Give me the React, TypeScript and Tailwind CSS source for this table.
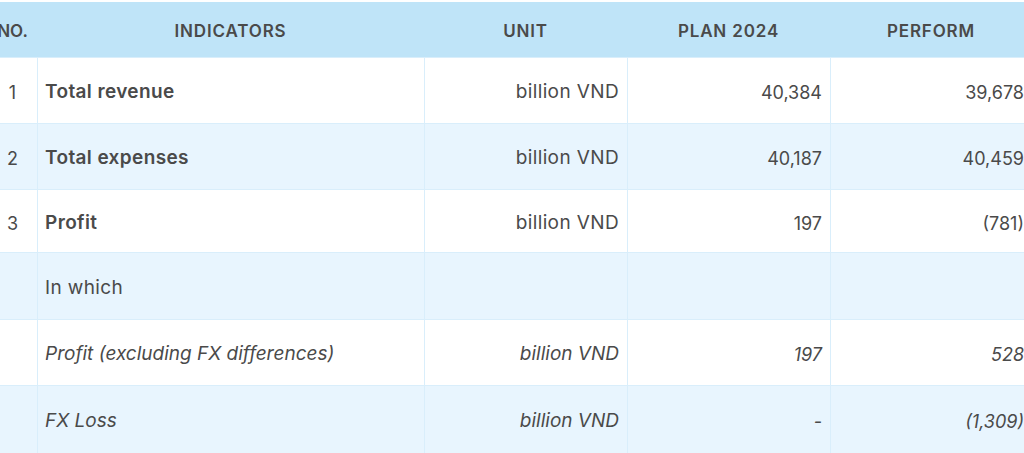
import React from "react";

type Row = {
    no?: string;
    label: string;
    unit?: string;
    plan?: string;
    perform?: string;
    bold?: boolean;
    italic?: boolean;
    striped?: boolean;
    height: string;
};

const rows: Row[] = [
    { no: "1", label: "Total revenue", unit: "billion VND", plan: "40,384", perform: "39,678", bold: true, height: "h-[66px]" },
    { no: "2", label: "Total expenses", unit: "billion VND", plan: "40,187", perform: "40,459", bold: true, striped: true, height: "h-[66px]" },
    { no: "3", label: "Profit", unit: "billion VND", plan: "197", perform: "(781)", bold: true, height: "h-[63px]" },
    { label: "In which", striped: true, height: "h-[67px]" },
    { label: "Profit (excluding FX differences)", unit: "billion VND", plan: "197", perform: "528", italic: true, height: "h-[66px]" },
    { label: "FX Loss", unit: "billion VND", plan: "-", perform: "(1,309)", italic: true, striped: true, height: "h-[68px]" },
];

const App = () => {
    return (
        <main className="w-[1024px] h-[453px] overflow-hidden bg-white pt-[2px] font-['Inter',sans-serif] text-[#4a4a4a]">
            <div className="ml-[-12px] w-[1044px]">
                <div className="flex h-[55px] items-center bg-[#bfe4f8] pt-[4px] text-[17px] font-semibold uppercase tracking-[0.05em]">
                    <div className="w-[49px] text-center tracking-normal">No.</div>
                    <div className="w-[387px] text-center">Indicators</div>
                    <div className="w-[203px] text-center">Unit</div>
                    <div className="w-[203px] text-center">Plan 2024</div>
                    <div className="w-[202px] text-center">Perform</div>
                </div>
                {rows.map((row, i) => (
                    <div
                        key={i}
                        className={`flex border-t border-[#d9eefb] text-[18px] ${row.height} ${row.striped ? "bg-[#e8f5fe]" : "bg-white"} ${row.italic ? "italic" : ""}`}
                    >
                        <div className="w-[49px] flex items-center justify-center pt-[4px]">
                            {row.no}
                        </div>
                        <div
                            className={`w-[387px] flex items-center border-l border-[#d9eefb] pl-[7px] pt-[4px] text-[19px] ${row.bold ? "font-semibold" : ""} ${row.italic ? "" : "tracking-[0.02em]"}`}
                        >
                            {row.label}
                        </div>
                        <div
                            className={`w-[203px] flex items-center justify-end border-l border-[#d9eefb] pr-2 pt-[4px] text-[19px] ${row.italic ? "" : "tracking-[0.02em]"}`}
                        >
                            {row.unit}
                        </div>
                        <div className="w-[203px] flex items-center justify-end border-l border-[#d9eefb] pr-2 pt-[4px]">
                            {row.plan}
                        </div>
                        <div className="w-[202px] flex items-center justify-end border-l border-[#d9eefb] pr-2 pt-[4px]">
                            {row.perform}
                        </div>
                    </div>
                ))}
            </div>
        </main>
    );
};

export default App;
